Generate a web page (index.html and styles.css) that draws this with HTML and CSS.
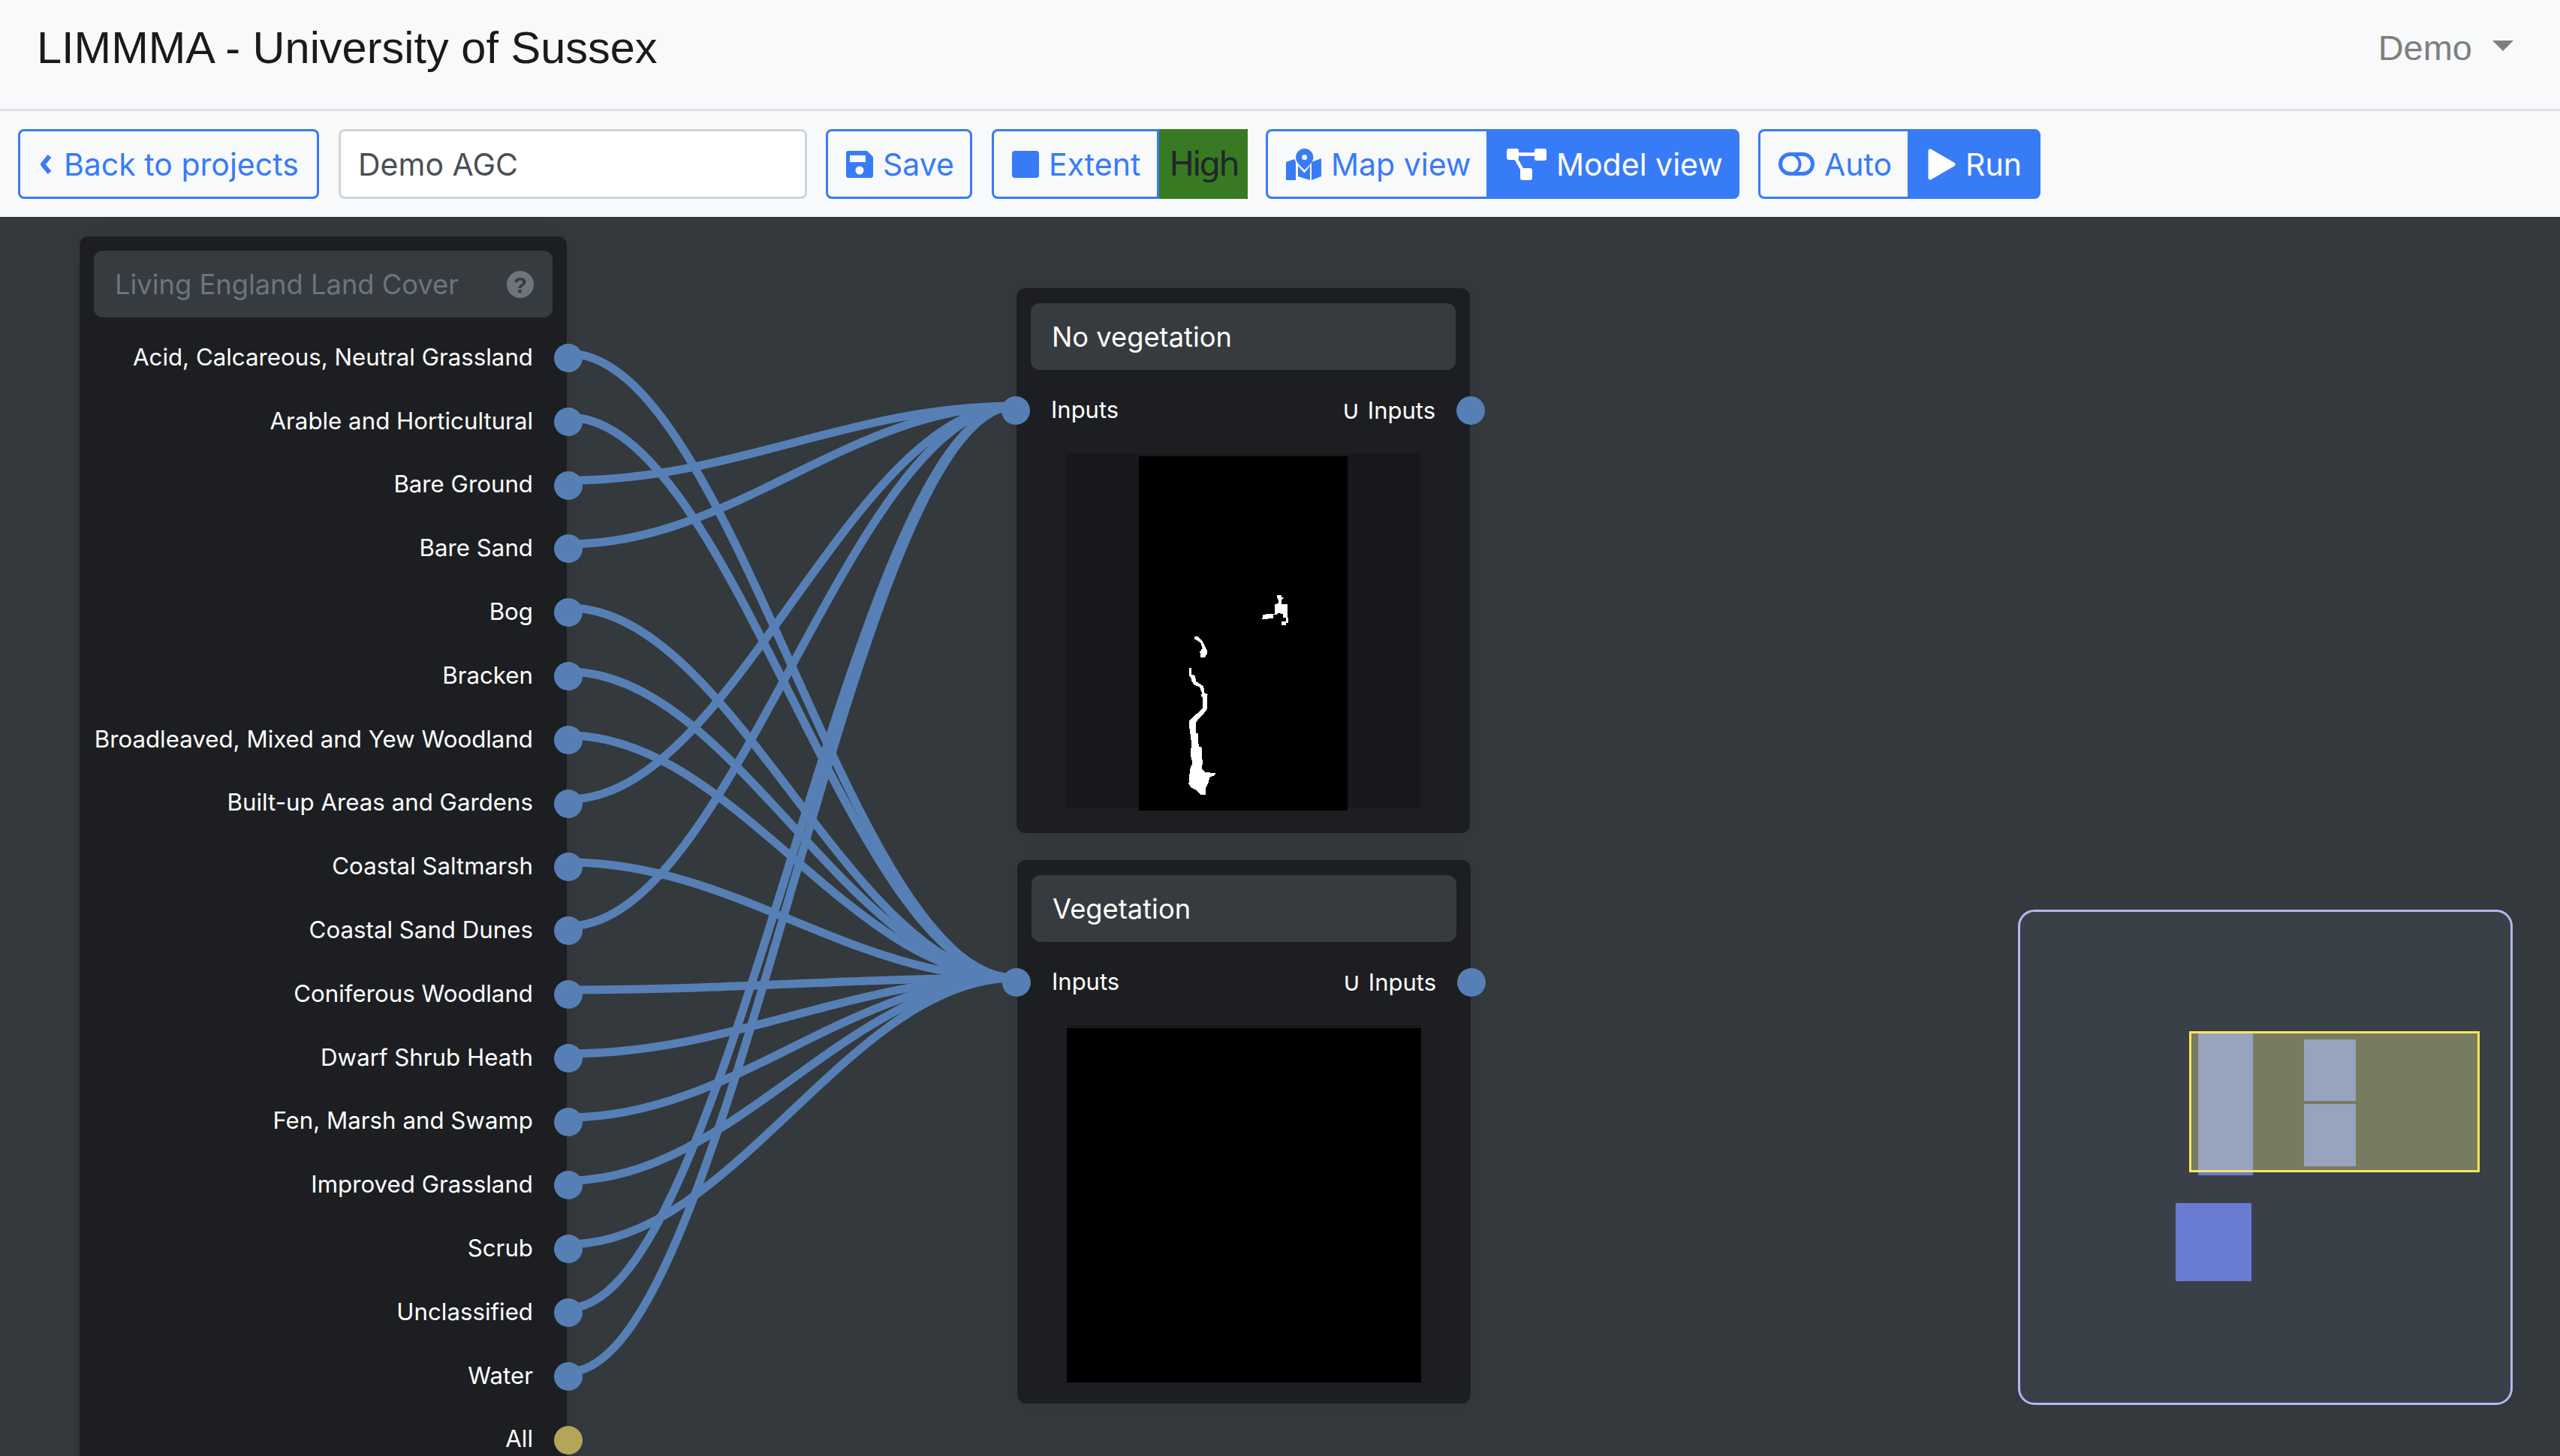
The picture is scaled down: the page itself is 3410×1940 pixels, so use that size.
FILE: index.html
```html
<!DOCTYPE html>
<html lang="en">
<head>
    <meta charset="UTF-8">
    <meta name="viewport" content="width=device-width, initial-scale=1.0">
    <title>LIMMMA - University of Sussex</title>
    <link rel="stylesheet" href="styles.css">
</head>
<body>
    <nav class="navbar">
        <span class="brand">LIMMMA - University of Sussex</span>
        <span class="user">Demo<i class="caret"></i></span>
    </nav>
    <div class="toolbar">
        <button class="btn back">
            <svg class="ico-back" viewBox="0 0 18 26"><path d="M14 2 5 13l9 11" fill="none" stroke="currentColor" stroke-width="6" stroke-linejoin="round"/></svg>
            Back to projects
        </button>
        <input class="name" value="Demo AGC">
        <button class="btn save">
            <svg class="ico" viewBox="0 0 36 36"><path fill="currentColor" fill-rule="evenodd" d="M3 0h25l8 8v25a3 3 0 0 1-3 3H3a3 3 0 0 1-3-3V3a3 3 0 0 1 3-3Zm2 6v9h21V6Zm13 14.500a5.500 5.500 0 1 0 0 11 5.500 5.500 0 0 0 0-11Z"/></svg>
            Save
        </button>
        <div class="group extents">
            <button class="btn extent">
                <svg class="ico" viewBox="0 0 36 36"><rect width="36" height="36" rx="4" fill="currentColor"/></svg>
                Extent
            </button>
            <span class="badge">High</span>
        </div>
        <div class="group views">
            <button class="btn left">
                <svg class="ico-map" viewBox="0 0 47 42"><path fill="currentColor" fill-rule="evenodd" d="M24.700 0a11.700 11.700 0 0 0-11.700 11.700c0 6 6 11.500 11.700 16.800 5.700-5.300 11.700-10.800 11.700-16.800A11.700 11.700 0 0 0 24.700 0Zm0 8a3.500 3.500 0 1 1 0 7 3.500 3.500 0 0 1 0-7Z"/><path fill="currentColor" d="m0 18 11-4 2 4v24L0 42Zm16 5 8.500 9.500L32 23v19l-16-5Zm18-5 13-5v24l-13 5Z"/></svg>
                Map view
            </button>
            <button class="btn right solid">
                <svg class="ico-model" viewBox="0 0 53 42"><rect width="16" height="15" rx="3" fill="currentColor"/><rect x="37" width="16" height="16" rx="3" fill="currentColor"/><rect x="18" y="26" width="16" height="16" rx="3" fill="currentColor"/><path d="M14 7.500h24M12 13l8 14" fill="none" stroke="currentColor" stroke-width="4.500"/></svg>
                Model view
            </button>
        </div>
        <div class="group runs">
            <button class="btn left">
                <svg class="ico-auto" viewBox="0 0 48 31"><rect x="2.500" y="2.500" width="43" height="26" rx="13" fill="none" stroke="currentColor" stroke-width="5"/><circle cx="15.500" cy="15.500" r="13" fill="none" stroke="currentColor" stroke-width="4"/></svg>
                Auto
            </button>
            <button class="btn right solid">
                <svg class="ico-run" viewBox="0 0 37 42"><path fill="currentColor" stroke="currentColor" stroke-width="5" stroke-linejoin="round" d="M3 3 34 21 3 39Z"/></svg>
                Run
            </button>
        </div>
    </div>

    <main class="canvas">
        <svg class="wires" viewBox="0 0 3410 1652" width="3410" height="1652">
            <g transform="translate(0 -289)" fill="none" stroke="#5680b5" stroke-width="11">
                <path d="M757 471C977 471 1132 1303 1352 1303"/>
                <path d="M757 556C977 556 1132 1303 1352 1303"/>
                <path d="M757 640C977 640 1132 541 1352 541"/>
                <path d="M757 725C977 725 1132 541 1352 541"/>
                <path d="M757 810C977 810 1132 1303 1352 1303"/>
                <path d="M757 895C977 895 1132 1303 1352 1303"/>
                <path d="M757 980C977 980 1132 1303 1352 1303"/>
                <path d="M757 1065C977 1065 1132 541 1352 541"/>
                <path d="M757 1149C977 1149 1132 1303 1352 1303"/>
                <path d="M757 1234C977 1234 1132 541 1352 541"/>
                <path d="M757 1319C977 1319 1132 1303 1352 1303"/>
                <path d="M757 1404C977 1404 1132 1303 1352 1303"/>
                <path d="M757 1489C977 1489 1132 1303 1352 1303"/>
                <path d="M757 1573C977 1573 1132 1303 1352 1303"/>
                <path d="M757 1658C977 1658 1132 1303 1352 1303"/>
                <path d="M757 1743C977 1743 1132 541 1352 541"/>
                <path d="M757 1828C977 1828 1132 541 1352 541"/>
            </g>
        </svg>

        <section class="node source">
            <header class="node-title muted">
                Living England Land Cover
                <svg class="help" viewBox="0 0 36 36"><circle cx="18" cy="18" r="18" fill="#6c757d"/><text x="18" y="29" text-anchor="middle">?</text></svg>
            </header>
            <ul class="outputs">
                <li>Acid, Calcareous, Neutral Grassland<i class="socket"></i></li>
                <li>Arable and Horticultural<i class="socket"></i></li>
                <li>Bare Ground<i class="socket"></i></li>
                <li>Bare Sand<i class="socket"></i></li>
                <li>Bog<i class="socket"></i></li>
                <li>Bracken<i class="socket"></i></li>
                <li>Broadleaved, Mixed and Yew Woodland<i class="socket"></i></li>
                <li>Built-up Areas and Gardens<i class="socket"></i></li>
                <li>Coastal Saltmarsh<i class="socket"></i></li>
                <li>Coastal Sand Dunes<i class="socket"></i></li>
                <li>Coniferous Woodland<i class="socket"></i></li>
                <li>Dwarf Shrub Heath<i class="socket"></i></li>
                <li>Fen, Marsh and Swamp<i class="socket"></i></li>
                <li>Improved Grassland<i class="socket"></i></li>
                <li>Scrub<i class="socket"></i></li>
                <li>Unclassified<i class="socket"></i></li>
                <li>Water<i class="socket"></i></li>
                <li>All<i class="socket all"></i></li>
            </ul>
        </section>

        <section class="node combine first">
            <header class="node-title">No vegetation</header>
            <div class="ports">
                <i class="socket in"></i>
                <span>Inputs</span>
                <span class="out-label"><em>∪</em> Inputs</span>
                <i class="socket out"></i>
            </div>
            <div class="preview">
                <svg class="raster" viewBox="-72 -456 834 1416" shape-rendering="crispEdges">
                    <rect x="-72" y="-456" width="834" height="1416" fill="#000"/>
                    <polygon fill="#fff" points="480,100 498,100 498,108 507,108 498,120 498,135 522,135 522,188 525,188 525,210 516,210 516,220 498,220 498,205 516,205 516,190 505,190 505,175 487,170 475,178 465,178 465,192 420,195 425,176 470,174 472,135 486,132 486,120 480,110"/>
                    <polygon fill="#fff" points="150,265 165,265 180,280 190,300 200,320 200,335 192,347 175,347 172,325 182,310 175,290 160,280 150,275"/>
                    <polygon fill="#fff" points="130,390 137,390 137,415 152,420 158,445 175,455 187,465 190,490 205,497 200,500 200,555 185,575 165,595 155,610 155,650 165,652 167,705 180,707 180,755 183,757 180,795 190,805 237,812 225,822 212,825 205,850 195,870 195,897 175,897 160,880 140,870 127,855 132,795 142,770 136,745 137,680 130,630 130,600 150,580 170,565 182,550 183,510 175,502 180,490 170,465 150,458 140,445 135,428 130,422"/>
                </svg>
            </div>
        </section>

        <section class="node combine second">
            <header class="node-title">Vegetation</header>
            <div class="ports">
                <i class="socket in"></i>
                <span>Inputs</span>
                <span class="out-label"><em>∪</em> Inputs</span>
                <i class="socket out"></i>
            </div>
            <div class="preview">
                <div class="raster full"></div>
            </div>
        </section>

        <aside class="minimap">
            <div class="mini mini-a"></div>
            <div class="mini mini-b"></div>
            <div class="mini mini-c"></div>
            <div class="mini mini-d"></div>
            <div class="mini-view"></div>
        </aside>
    </main>
</body>
</html>
```

FILE: styles.css
```css
* { box-sizing: border-box; }

body {
    margin: 0;
    height: 1940px;
    overflow: hidden;
    display: flex;
    flex-direction: column;
    font-family: "Liberation Sans", Arial, sans-serif;
    background: #f8f9fa;
}

/* top bar */
.navbar {
    height: 148px;
    flex: none;
    display: flex;
    align-items: center;
    justify-content: space-between;
    padding: 0 62px 18px 49px;
    background: #f8f9fa;
    border-bottom: 3px solid #dfe1e6;
}
.brand { font-size: 59.5px; color: #1a1a1a; }
.user { font-size: 47px; color: #7f7f7f; display: flex; align-items: center; }
.caret {
    margin-left: 27px;
    margin-bottom: 6px;
    border-top: 14px solid #7f7f7f;
    border-left: 14px solid transparent;
    border-right: 14px solid transparent;
}

/* toolbar */
.toolbar {
    height: 141px;
    flex: none;
    display: flex;
    align-items: center;
    gap: 25px;
    padding: 0 24px;
}
.btn {
    height: 93px;
    padding: 0 0 0 24px;
    display: flex;
    align-items: center;
    gap: 13px;
    font: 41px Inter, "Liberation Sans", sans-serif;
    color: #387bf7;
    background: transparent;
    border: 3px solid #387bf7;
    border-radius: 8px;
    white-space: nowrap;
}
.back { width: 401px; gap: 15px; padding-left: 25px; }
.save { width: 195px; }
.extent { width: 223px; border-radius: 8px 0 0 8px; }
.name {
    width: 624px;
    height: 93px;
    margin-left: 1px;
    padding: 0 23px;
    font: 41px Inter, "Liberation Sans", sans-serif;
    color: #4a4f55;
    background: #fff;
    border: 3px solid #ced4da;
    border-radius: 8px;
}
.ico { width: 36px; height: 36px; flex: none; }
.ico-back { width: 18px; height: 26px; flex: none; }
.ico-map { width: 47px; height: 42px; flex: none; }
.ico-model { width: 53px; height: 42px; flex: none; }
.ico-auto { width: 48px; height: 31px; flex: none; }
.ico-run { width: 37px; height: 42px; flex: none; }
.group { display: flex; }
.extents { margin-left: 1px; }
.badge {
    width: 118px;
    height: 93px;
    display: flex;
    align-items: center;
    justify-content: center;
    font: 45px "DejaVu Sans", sans-serif;
    letter-spacing: -3px;
    color: #22262a;
    background: #387a22;
}
.left { border-radius: 8px 0 0 8px; border-right: 0; }
.right { border-radius: 0 8px 8px 0; }
.solid { color: #fff; background: #387bf7; }
.views { margin-left: -1px; }
.views .left { width: 294px; }
.views .right { width: 337px; }
.runs .left { width: 199px; }
.runs .right { width: 177px; }

/* editor canvas */
.canvas {
    position: relative;
    flex: 1;
    overflow: hidden;
    background: #34393d;
}
.wires { position: absolute; left: 0; top: 0; z-index: 1; }
.node {
    position: absolute;
    background: #1c1e22;
    border-radius: 12px;
    box-shadow: 0 0 24px rgba(0, 0, 0, .08);
}
.source { left: 106px; top: 26px; width: 649px; height: 1700px; padding: 19px 19px 0; }
.combine { width: 604px; padding: 20px 19px; }
.first { left: 1354px; top: 95px; height: 726px; }
.second { left: 1355px; top: 857px; height: 724px; }
.node-title {
    height: 89px;
    display: flex;
    align-items: center;
    justify-content: space-between;
    padding: 0 28px;
    font: 36.300px Inter, "Liberation Sans", sans-serif;
    color: #fff;
    background: #363b3f;
    border-radius: 12px;
}
.node-title.muted { color: #6c757d; padding-right: 25px; }
.help { width: 36px; height: 36px; }
.help text { font: bold 30px "Liberation Sans", sans-serif; fill: #363b3f; }

.outputs { margin: 12px 0 0; padding: 0; list-style: none; }
.outputs li {
    height: 84.800px;
    display: flex;
    align-items: center;
    justify-content: flex-end;
    font: 31.250px Inter, "Liberation Sans", sans-serif;
    color: #fff;
    padding: 0 26px 3px 0;
    position: relative;
    white-space: nowrap;
}
.socket {
    position: absolute;
    width: 38px;
    height: 38px;
    border-radius: 50%;
    background: #5680b5;
    z-index: 2;
}
.outputs .socket { right: -40px; top: 23px; }
.outputs .socket.all { background: #b3a55b; }

.ports {
    position: relative;
    height: 111px;
    padding: 0 27px 6px;
    display: flex;
    align-items: center;
    justify-content: space-between;
    font: 31px Inter, "Liberation Sans", sans-serif;
    color: #fff;
}
.ports em { font-style: normal; font-size: 34px; margin-right: 1px; }
.socket.in { left: -39px; top: 35px; }
.socket.out { right: -39px; top: 35px; }
.preview {
    width: 472px;
    height: 472px;
    margin: 0 auto;
    display: flex;
    justify-content: center;
    background: #16181b;
}
.raster { display: block; width: 278px; height: 472px; margin-top: 4px; flex: none; }
.raster.full { width: 472px; background: #000; }

/* minimap */
.minimap {
    position: absolute;
    left: 2688px;
    top: 923px;
    width: 659px;
    height: 660px;
    background: #3a4048;
    border: 3px solid #b1b9f0;
    border-radius: 22px;
    z-index: 3;
}
.mini { position: absolute; background: #6a7bd3; }
.mini-a { left: 237px; top: 162px; width: 73px; height: 189px; }
.mini-b { left: 378px; top: 170px; width: 69px; height: 82px; }
.mini-c { left: 378px; top: 256px; width: 69px; height: 83px; }
.mini-d { left: 207px; top: 388px; width: 101px; height: 104px; }
.mini-view {
    position: absolute;
    left: 225px;
    top: 159px;
    width: 387px;
    height: 188px;
    background: rgba(246, 246, 145, .33);
    border: 3px solid #ffe45c;
}
```
